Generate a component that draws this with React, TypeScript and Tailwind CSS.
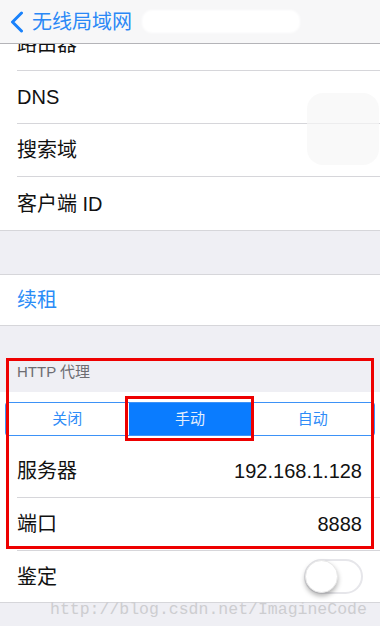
const font = 'font-["Liberation_Sans","Noto_Sans_CJK_SC",sans-serif]';

function Row({ label, value, last }: { label: string; value?: string; last?: boolean }) {
  return (
    <div className="pl-[17px]">
      <div className={`h-[53px] flex items-center justify-between pr-[18px] ${last ? '' : 'border-b border-[#d6d6da]'}`}>
        <span className="text-[20px] text-[#111]">{label}</span>
        {value && <span className="text-[20px] text-[#111]">{value}</span>}
      </div>
    </div>
  );
}

function Toggle() {
  return (
    <div className="w-[59px] h-[35px] rounded-full border-2 border-[#e6e6ea] bg-white relative">
      <div className="absolute left-[-1px] top-[-1px] w-[33px] h-[33px] rounded-full bg-white shadow-[0_3px_5px_rgba(0,0,0,0.3)] border border-[#e8e8e8]" />
    </div>
  );
}

export default function App() {
  const segs = ['关闭', '手动', '自动'];
  return (
    <div className={`relative w-[380px] h-[626px] overflow-hidden bg-[#efeff4] ${font}`}>
      {/* nav bar */}
      <div className="h-[44px] bg-[#f7f7f8] border-b border-[#b4b4b8] flex items-center pl-[9px]">
        <svg width="16" height="22" viewBox="0 0 16 22" className="mr-[7px]">
          <path d="M12.5 2 L3.5 11 L12.5 20" fill="none" stroke="#1a82fb" strokeWidth="3" strokeLinecap="round" strokeLinejoin="round" />
        </svg>
        <span className="text-[20px] text-[#2a88f6]">无线局域网</span>
        <div className="ml-[10px] w-[158px] h-[23px] rounded-[10px] bg-white blur-[1px]" />
      </div>

      {/* first section */}
      <div className="bg-white border-b border-[#d6d6da]">
        <div className="h-[27px] overflow-hidden">
          <div className="mt-[-26px]">
            <Row label="路由器" />
          </div>
        </div>
        <Row label="DNS" />
        <Row label="搜索域" />
        <Row label="客户端 ID" last />
      </div>

      <div className="h-[43px]" />

      <div className="bg-white border-y border-[#d6d6da] h-[52px] flex items-center pl-[17px]">
        <span className="text-[20px] text-[#2a8cf7]">续租</span>
      </div>

      {/* HTTP proxy */}
      <div className="h-[66px] flex items-end pb-[9px] pl-[17px]">
        <span className="text-[15px] text-[#6d6d72]">HTTP 代理</span>
      </div>
      <div className="bg-white">
        <div className="pt-[10px] pb-[9px] px-[5px]">
          <div className="h-[34px] border border-[#3d92f7] rounded-[3px] grid grid-cols-3 overflow-hidden">
            {segs.map((s, i) => (
              <div
                key={s}
                className={`flex items-center justify-center text-[15px] ${i === 1 ? 'bg-[#0a7cff] text-[#e4eefc]' : 'text-[#2f8cf7]'}`}
              >
                {s}
              </div>
            ))}
          </div>
        </div>
        <Row label="服务器" value="192.168.1.128" />
        <Row label="端口" value="8888" />
        <div className="pl-[17px] border-b border-[#d6d6da]">
          <div className="h-[51px] flex items-center justify-between pr-[17px]">
            <span className="text-[20px] text-[#111]">鉴定</span>
            <Toggle />
          </div>
        </div>
      </div>

      {/* annotations */}
      <div className="absolute left-[6px] top-[358px] w-[368px] h-[191px] border-[3px] border-[#ee0000]" />
      <div className="absolute left-[125px] top-[396px] w-[129px] h-[45px] border-[3px] border-[#ee0000]" />

      {/* watermark */}
      <div className='absolute left-[50px] top-[599px] text-[16.5px] leading-[22px] text-[#cdcdd0] font-["Liberation_Mono",monospace]'>
        http://blog.csdn.net/ImagineCode
      </div>

      {/* faint ghost button */}
      <div className="absolute left-[307px] top-[93px] w-[72px] h-[72px] rounded-[16px] bg-[#f6f6f7] opacity-70" />
    </div>
  );
}
